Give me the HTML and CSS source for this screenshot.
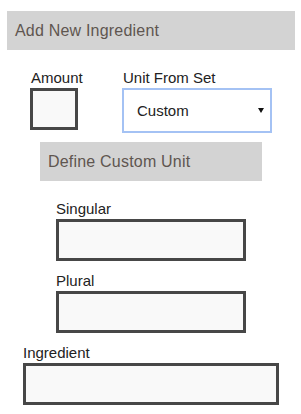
FILE: index.html
```html
<!DOCTYPE html>
<html lang="en">
<head>
    <meta charset="UTF-8">
    <meta name="viewport" content="width=device-width, initial-scale=1.0">
    <title>Add New Ingredient</title>
    <link rel="stylesheet" href="styles.css">
</head>
<body>
    <div class="panel">
        <div class="bar">Add New Ingredient</div>

        <div class="unit-row">
            <div class="field amount-field">
                <label class="label" for="amount">Amount</label>
                <input class="box amount" id="amount" type="text">
            </div>
            <div class="field">
                <label class="label" for="unit">Unit From Set</label>
                <div class="select-wrap">
                    <select class="unit-select" id="unit">
                        <option>Custom</option>
                    </select>
                    <span class="arrow"></span>
                </div>
            </div>
        </div>

        <div class="custom-unit">
            <div class="bar">Define Custom Unit</div>
            <div class="custom-fields">
                <div class="field">
                    <label class="label" for="singular">Singular</label>
                    <input class="box wide" id="singular" type="text">
                </div>
                <div class="field">
                    <label class="label" for="plural">Plural</label>
                    <input class="box wide" id="plural" type="text">
                </div>
            </div>
        </div>

        <div class="field ingredient">
            <label class="label" for="ingredient">Ingredient</label>
            <input class="box full" id="ingredient" type="text">
        </div>
    </div>
</body>
</html>
```

FILE: styles.css
```css
body {
    margin: 0;
    padding: 0;
    background: white;
    font-family: 'Liberation Sans', Arial, sans-serif;
    color: #222;
}

.panel {
    padding: 11px 6px 0 7px;
    display: flex;
    flex-direction: column;
}

.bar {
    height: 39px;
    line-height: 39px;
    padding-left: 8px;
    background-color: #d3d3d3;
    color: #5f5650;
    font-size: 16px;
    letter-spacing: 0.2px;
}

.field {
    display: flex;
    flex-direction: column;
}

.label {
    display: block;
    font-size: 15px;
    line-height: 18px;
    margin-bottom: 1px;
    color: #222;
    white-space: nowrap;
}

.box {
    box-sizing: border-box;
    margin: 0;
    border: 3px solid #474747;
    background: #f9f9f9;
    height: 42px;
    font-size: 15px;
    padding: 0 6px;
    outline: none;
}

.unit-row {
    display: flex;
    gap: 44px;
    margin-top: 19px;
    padding-left: 23px;
}

.unit-row .label {
    margin-left: 1px;
}

.amount-field {
    width: 48px;
}

.amount {
    width: 48px;
}

.select-wrap {
    position: relative;
    width: 150px;
    height: 45px;
}

.unit-select {
    appearance: none;
    -webkit-appearance: none;
    box-sizing: border-box;
    width: 150px;
    height: 45px;
    margin: 0;
    padding: 0 0 0 13px;
    border: 2px solid #a4c2f4;
    border-radius: 0;
    background: white;
    color: #222;
    font-family: 'Liberation Sans', Arial, sans-serif;
    font-size: 15px;
    outline: none;
}

.arrow {
    position: absolute;
    top: 20px;
    right: 8px;
    width: 0;
    height: 0;
    border-left: 3px solid transparent;
    border-right: 3px solid transparent;
    border-top: 5px solid #111;
    pointer-events: none;
}

.custom-unit {
    margin-top: 9px;
    margin-left: 33px;
    width: 222px;
}

.custom-fields {
    display: flex;
    flex-direction: column;
    gap: 11px;
    margin-top: 19px;
    padding-left: 16px;
}

.wide {
    width: 190px;
}

.ingredient {
    margin-top: 11px;
    padding-left: 16px;
}

.full {
    width: 256px;
}
```
